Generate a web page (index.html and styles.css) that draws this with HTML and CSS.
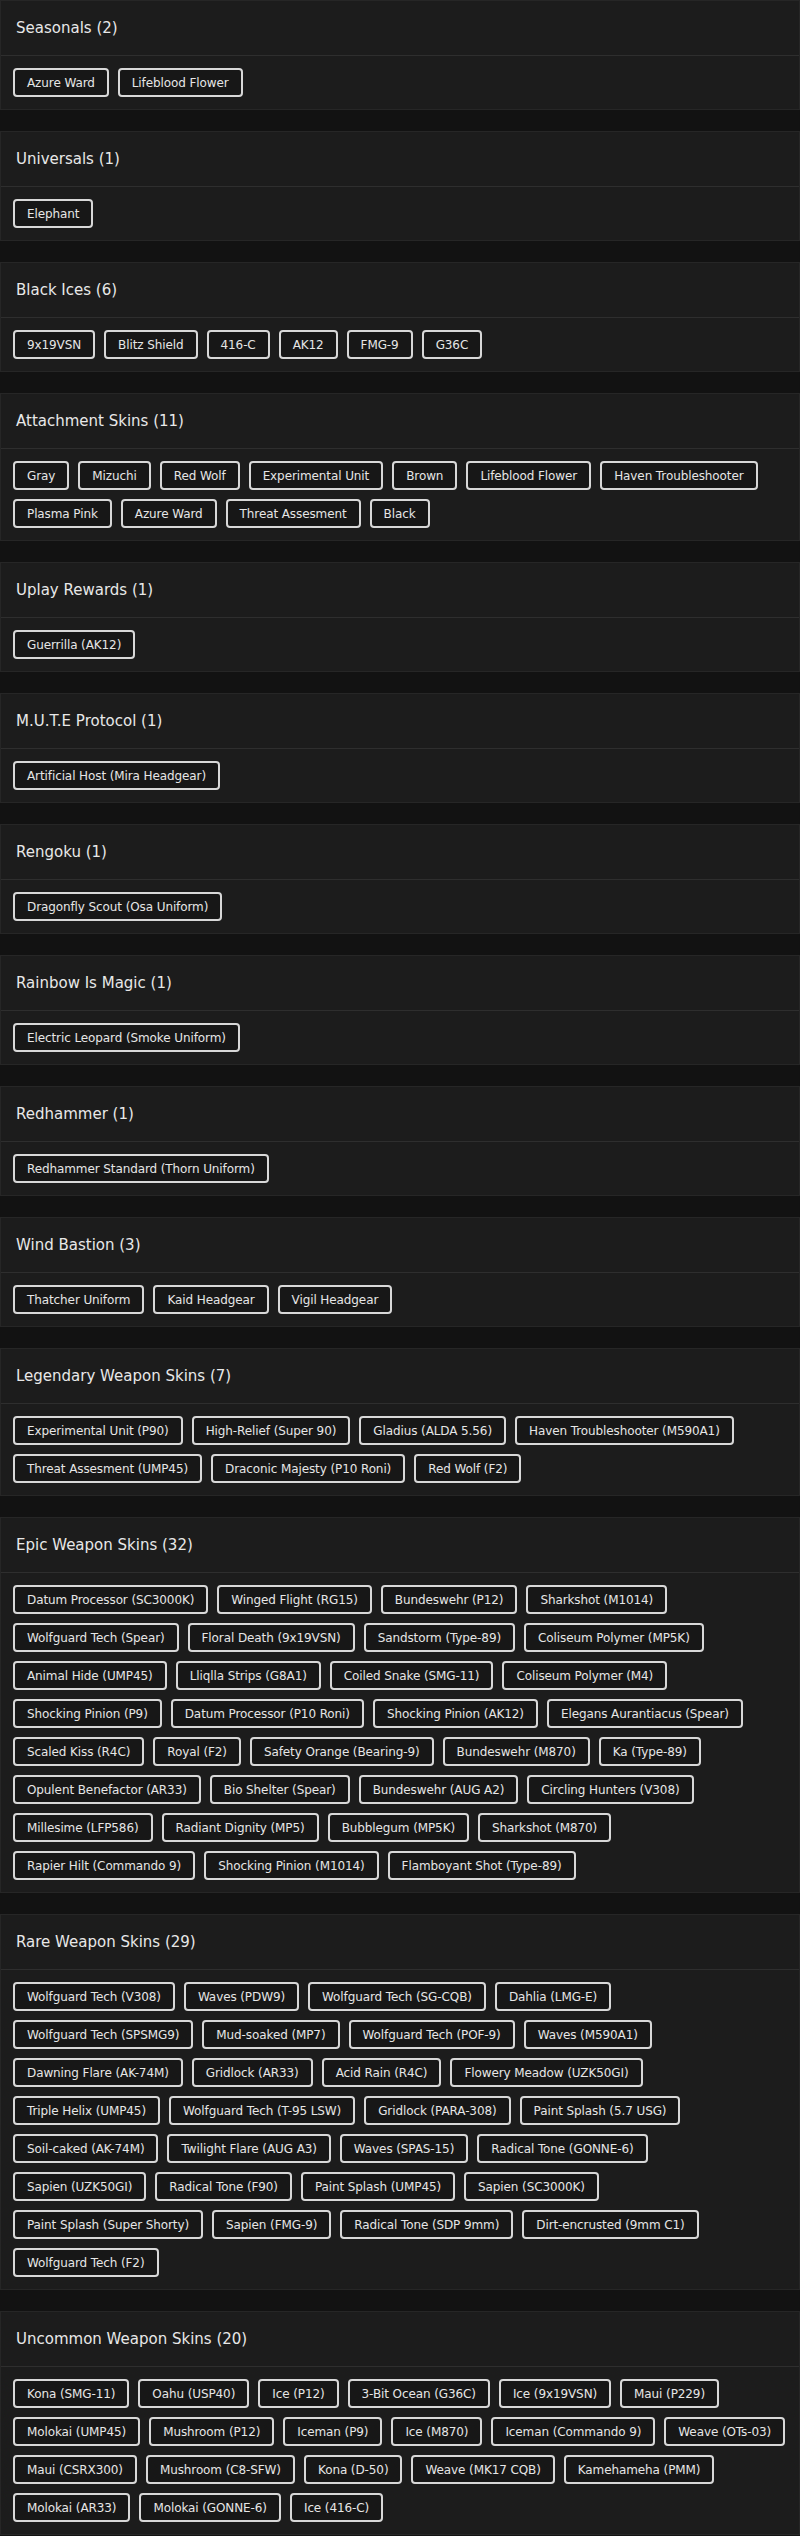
FILE: index.html
```html
<!DOCTYPE html>
<html lang="en">

<head>
    <meta charset="UTF-8">
    <meta name="viewport" content="width=device-width, initial-scale=1.0">
    <title>Inventory</title>
    <link rel="stylesheet" href="styles.css">
</head>

<body>
    <div id="lista"></div>

    <script>
        var secciones = [
            { titulo: "Seasonals", items: ["Azure Ward", "Lifeblood Flower"] },
            { titulo: "Universals", items: ["Elephant"] },
            { titulo: "Black Ices", items: ["9x19VSN", "Blitz Shield", "416-C", "AK12", "FMG-9", "G36C"] },
            { titulo: "Attachment Skins", items: ["Gray", "Mizuchi", "Red Wolf", "Experimental Unit", "Brown", "Lifeblood Flower", "Haven Troubleshooter", "Plasma Pink", "Azure Ward", "Threat Assesment", "Black"] },
            { titulo: "Uplay Rewards", items: ["Guerrilla (AK12)"] },
            { titulo: "M.U.T.E Protocol", items: ["Artificial Host (Mira Headgear)"] },
            { titulo: "Rengoku", items: ["Dragonfly Scout (Osa Uniform)"] },
            { titulo: "Rainbow Is Magic", items: ["Electric Leopard (Smoke Uniform)"] },
            { titulo: "Redhammer", items: ["Redhammer Standard (Thorn Uniform)"] },
            { titulo: "Wind Bastion", items: ["Thatcher Uniform", "Kaid Headgear", "Vigil Headgear"] },
            { titulo: "Legendary Weapon Skins", items: ["Experimental Unit (P90)", "High-Relief (Super 90)", "Gladius (ALDA 5.56)", "Haven Troubleshooter (M590A1)", "Threat Assesment (UMP45)", "Draconic Majesty (P10 Roni)", "Red Wolf (F2)"] },
            { titulo: "Epic Weapon Skins", items: ["Datum Processor (SC3000K)", "Winged Flight (RG15)", "Bundeswehr (P12)", "Sharkshot (M1014)", "Wolfguard Tech (Spear)", "Floral Death (9x19VSN)", "Sandstorm (Type-89)", "Coliseum Polymer (MP5K)", "Animal Hide (UMP45)", "Lliqlla Strips (G8A1)", "Coiled Snake (SMG-11)", "Coliseum Polymer (M4)", "Shocking Pinion (P9)", "Datum Processor (P10 Roni)", "Shocking Pinion (AK12)", "Elegans Aurantiacus (Spear)", "Scaled Kiss (R4C)", "Royal (F2)", "Safety Orange (Bearing-9)", "Bundeswehr (M870)", "Ka (Type-89)", "Opulent Benefactor (AR33)", "Bio Shelter (Spear)", "Bundeswehr (AUG A2)", "Circling Hunters (V308)", "Millesime (LFP586)", "Radiant Dignity (MP5)", "Bubblegum (MP5K)", "Sharkshot (M870)", "Rapier Hilt (Commando 9)", "Shocking Pinion (M1014)", "Flamboyant Shot (Type-89)"] },
            { titulo: "Rare Weapon Skins", items: ["Wolfguard Tech (V308)", "Waves (PDW9)", "Wolfguard Tech (SG-CQB)", "Dahlia (LMG-E)", "Wolfguard Tech (SPSMG9)", "Mud-soaked (MP7)", "Wolfguard Tech (POF-9)", "Waves (M590A1)", "Dawning Flare (AK-74M)", "Gridlock (AR33)", "Acid Rain (R4C)", "Flowery Meadow (UZK50GI)", "Triple Helix (UMP45)", "Wolfguard Tech (T-95 LSW)", "Gridlock (PARA-308)", "Paint Splash (5.7 USG)", "Soil-caked (AK-74M)", "Twilight Flare (AUG A3)", "Waves (SPAS-15)", "Radical Tone (GONNE-6)", "Sapien (UZK50GI)", "Radical Tone (F90)", "Paint Splash (UMP45)", "Sapien (SC3000K)", "Paint Splash (Super Shorty)", "Sapien (FMG-9)", "Radical Tone (SDP 9mm)", "Dirt-encrusted (9mm C1)", "Wolfguard Tech (F2)"] },
            { titulo: "Uncommon Weapon Skins", items: ["Kona (SMG-11)", "Oahu (USP40)", "Ice (P12)", "3-Bit Ocean (G36C)", "Ice (9x19VSN)", "Maui (P229)", "Molokai (UMP45)", "Mushroom (P12)", "Iceman (P9)", "Ice (M870)", "Iceman (Commando 9)", "Weave (OTs-03)", "Maui (CSRX300)", "Mushroom (C8-SFW)", "Kona (D-50)", "Weave (MK17 CQB)", "Kamehameha (PMM)", "Molokai (AR33)", "Molokai (GONNE-6)", "Ice (416-C)"] }
        ];

        const lista = document.getElementById('lista');

        secciones.forEach(function (seccion) {
            var card = document.createElement('div');
            card.className = 'card';
            var chips = seccion.items.map(function (item) {
                return `<span class="chip">${item}</span>`;
            }).join('');
            card.innerHTML = `
                <div class="card-header">${seccion.titulo} (${seccion.items.length})</div>
                <div class="card-body">${chips}</div>
            `;
            lista.appendChild(card);
        });
    </script>
</body>

</html>
```

FILE: styles.css
```css
body {
    font-family: "DejaVu Sans", sans-serif;
    background-color: #121212;
    color: #e6e6e6;
    margin: 0;
    padding: 0;
}

.card {
    background-color: #1c1c1c;
    border: 1px solid #262626;
    margin-bottom: 21px;
}

.card:last-child {
    margin-bottom: 0;
}

.card-header {
    height: 54px;
    padding: 0 15px;
    display: flex;
    align-items: center;
    font-size: 15px;
    color: #e8e8e8;
    border-bottom: 1px solid #2e2e2e;
}

.card-body {
    padding: 12px;
    display: flex;
    flex-wrap: wrap;
    gap: 9px;
}

.chip {
    height: 29px;
    box-sizing: border-box;
    padding: 0 12px;
    display: flex;
    align-items: center;
    font-size: 12px;
    letter-spacing: -0.1px;
    color: #e6e6e6;
    background-color: #171717;
    border: 2px solid #d8d8d8;
    border-radius: 4px;
    white-space: nowrap;
}
```
